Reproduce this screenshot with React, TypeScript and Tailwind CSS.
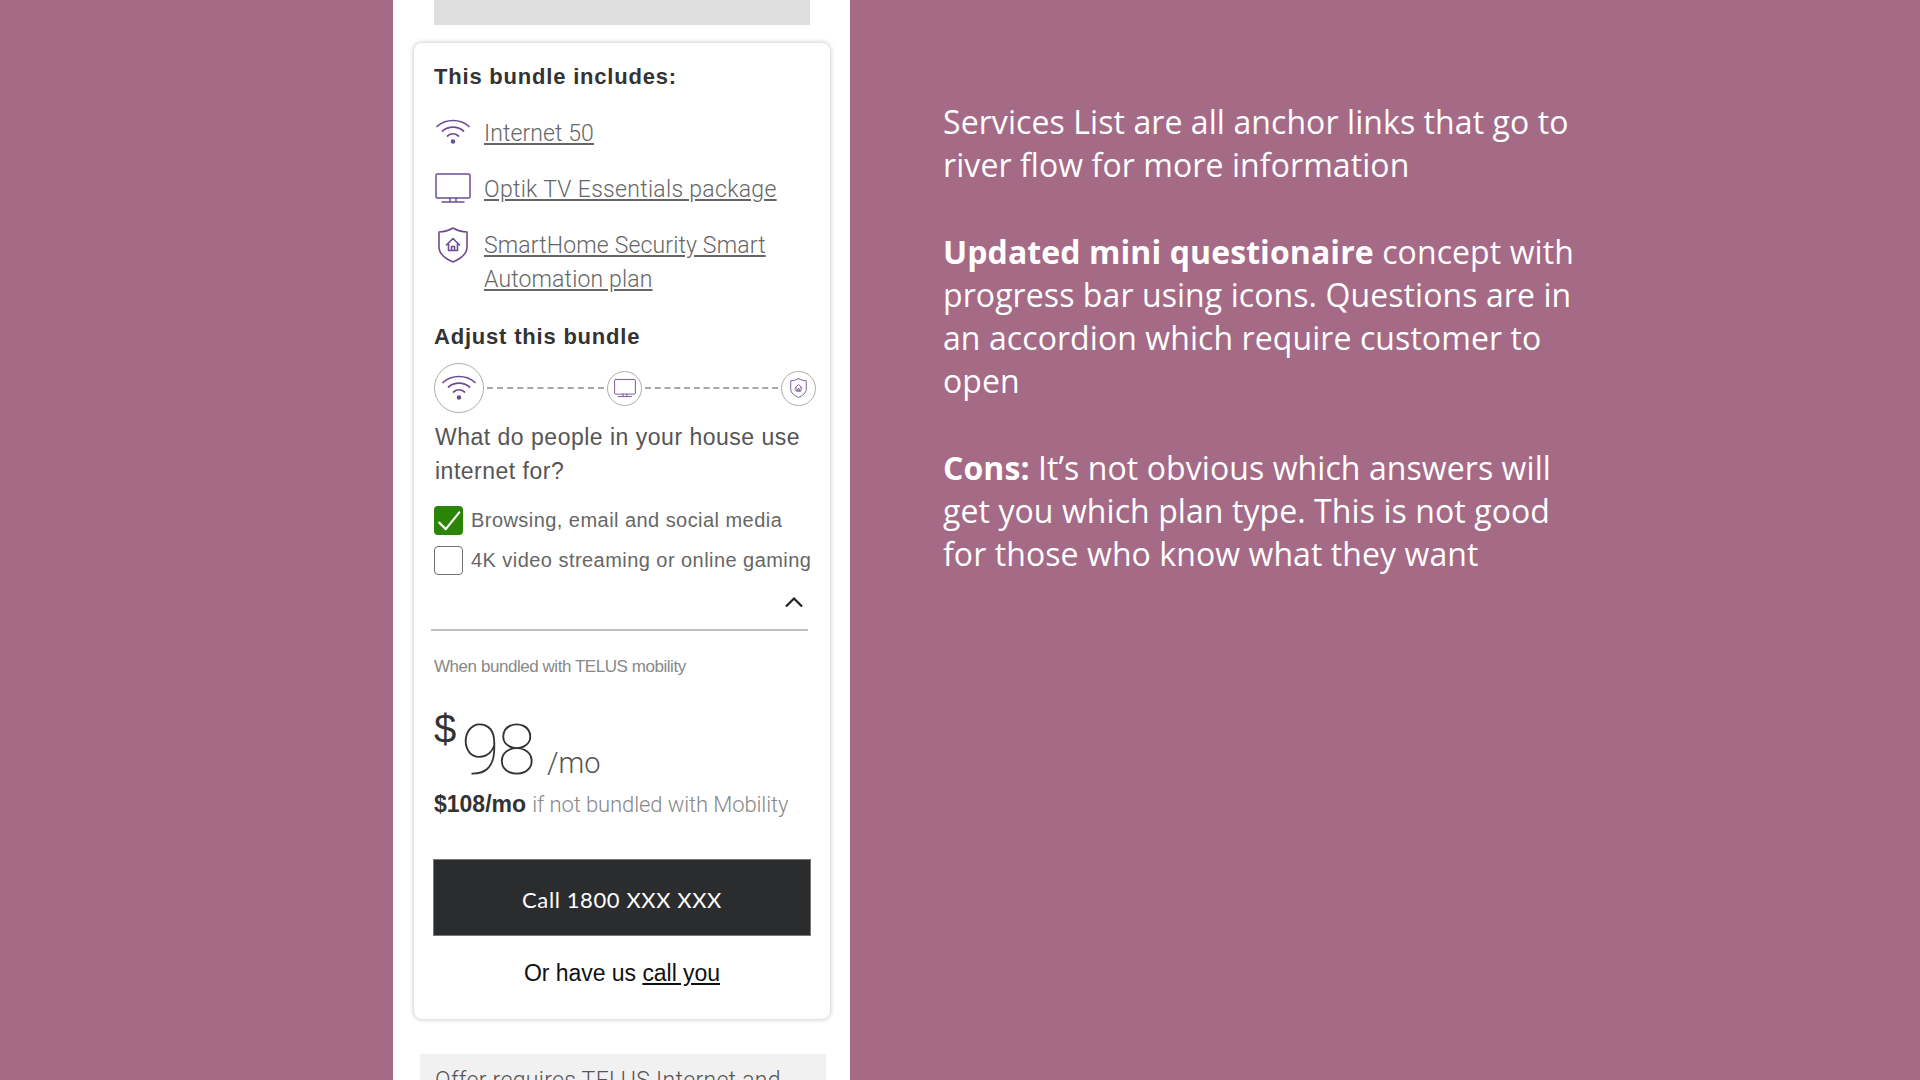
import React from 'react';

const PURPLE = '#6d4c94';

function WifiIcon({ className }: { className?: string }) {
  return (
    <svg viewBox="0 0 34 26" fill="none" stroke={PURPLE} strokeWidth="1.7" strokeLinecap="round" className={className}>
      <path d="M1 7.5C9.5 -0.5 24.5 -0.5 33 7.5" />
      <path d="M6.5 12C12.5 6.8 21.5 6.8 27.5 12" />
      <path d="M11.5 17C14.8 14.2 19.2 14.2 22.5 17" />
      <circle cx="17" cy="22.5" r="2.2" fill={PURPLE} stroke="none" />
    </svg>
  );
}

function TvIcon({ className }: { className?: string }) {
  return (
    <svg viewBox="0 0 36 30" fill="none" stroke={PURPLE} strokeWidth="1.5" strokeLinecap="round" strokeLinejoin="round" className={className}>
      <rect x="1" y="1" width="34" height="24" rx="1.5" />
      <path d="M15 25V28M21 25V28M7 29H29" />
    </svg>
  );
}

function ShieldIcon({ className }: { className?: string }) {
  return (
    <svg viewBox="0 0 30 36" fill="none" stroke={PURPLE} strokeWidth="1.6" strokeLinecap="round" strokeLinejoin="round" className={className}>
      <path d="M15 1C19 3.4 23.5 4.8 29 5V20C29 27 22 32 15 35C8 32 1 27 1 20V5C6.5 4.8 11 3.4 15 1Z" />
      <path d="M8.5 18L15 11.5L21.5 18M10.5 16.5V23.5H19.5V16.5M13.5 23.5V19.5H16.5V23.5" />
    </svg>
  );
}

function StepCircle({ size, children }: { size: string; children: React.ReactNode }) {
  return (
    <div className={`${size} flex shrink-0 items-center justify-center rounded-full border-[1.5px] border-[#adadad] bg-white`}>
      {children}
    </div>
  );
}

export default function App() {
  return (
    <div className="flex h-screen overflow-hidden bg-[#a56a86] font-['Liberation_Sans',sans-serif]">
      <div className="ml-[393px] h-full w-[457px] shrink-0 overflow-hidden bg-white">
        <div className="ml-[41px] h-[25px] w-[376px] bg-[#dedede]" />

        {/* Bundle card */}
        <div className="ml-[21px] mt-[18px] h-[976px] w-[416px] rounded-lg bg-white pl-5 pt-[19px] shadow-[0_0_5px_rgba(0,0,0,0.28)]">
          <h2 className="text-[22px] font-bold leading-[30px] tracking-[0.8px] text-[#333]">This bundle includes:</h2>

          <div className="mt-[25px] flex h-[34px] items-center">
            <div className="flex w-[50px] shrink-0 pb-[5px] pl-[2px]"><WifiIcon className="h-[26px] w-[34px]" /></div>
            <a className="font-['Roboto',sans-serif] text-[23px] font-light leading-[34px] tracking-[0.1px] text-[#666] underline">Internet 50</a>
          </div>
          <div className="mt-[22px] flex h-[34px] items-center">
            <div className="flex w-[50px] shrink-0 pb-[4px] pl-[1px]"><TvIcon className="h-[30px] w-[36px]" /></div>
            <a className="font-['Roboto',sans-serif] text-[23px] font-light leading-[34px] tracking-[0.3px] text-[#666] underline">Optik TV Essentials package</a>
          </div>
          <div className="mt-[22px] flex">
            <div className="-mt-[2px] flex w-[50px] shrink-0 items-start pl-1"><ShieldIcon className="h-[36px] w-[30px]" /></div>
            <a className="w-[320px] font-['Roboto',sans-serif] text-[23px] font-light leading-[34px] tracking-[0.15px] text-[#666] underline">SmartHome Security Smart Automation plan</a>
          </div>

          <h2 className="mt-[25px] text-[22px] font-bold leading-[30px] tracking-[0.8px] text-[#333]">Adjust this bundle</h2>

          {/* Progress stepper */}
          <div className="mt-[11px] flex h-[50px] w-[382px] items-center">
            <StepCircle size="h-[50px] w-[50px]"><WifiIcon className="h-[26px] w-[34px]" /></StepCircle>
            <div className="mx-[3px] w-[117px] border-t-2 border-dashed border-[#a8a8a8]" />
            <StepCircle size="h-[35px] w-[35px]"><TvIcon className="h-[20px] w-[22px]" /></StepCircle>
            <div className="mx-[3px] flex-1 border-t-2 border-dashed border-[#a8a8a8]" />
            <StepCircle size="h-[35px] w-[35px]"><ShieldIcon className="h-[20px] w-[17px]" /></StepCircle>
          </div>

          <p className="mt-[7px] w-[385px] pl-[1px] text-[23px] leading-[34px] tracking-[0.5px] text-[#555]">What do people in your house use internet for?</p>

          {/* Options */}
          <div className="mt-[18px] flex h-[29px] items-center">
            <div className="flex h-[29px] w-[29px] shrink-0 items-center justify-center rounded-[4px] bg-[#2a8507]">
              <svg viewBox="0 0 24 24" fill="none" stroke="white" strokeWidth="2" strokeLinecap="round" strokeLinejoin="round" className="h-[26px] w-[26px]">
                <path d="M3 13.5L9 19.5L21.5 4" />
              </svg>
            </div>
            <span className="ml-2 whitespace-nowrap pb-[2px] text-[20px] tracking-[0.45px] text-[#666]">Browsing, email and social media</span>
          </div>
          <div className="mt-[11px] flex h-[29px] items-center">
            <div className="h-[29px] w-[29px] shrink-0 rounded-[4px] border-[1.5px] border-[#6f7278] bg-white" />
            <span className="ml-2 whitespace-nowrap pb-[2px] text-[20px] tracking-[0.45px] text-[#666]">4K video streaming or online gaming</span>
          </div>

          <div className="mt-[22px] flex w-[369px] justify-end">
            <svg viewBox="0 0 18 10" fill="none" stroke="#222" strokeWidth="2.2" className="h-[10px] w-[18px]">
              <path d="M1 9.5L9 1.5L17 9.5" />
            </svg>
          </div>
          <div className="ml-[-3px] mt-[22px] h-[2px] w-[377px] bg-[#bdbdbd]" />

          <p className="mt-[23px] text-[17px] leading-[26px] tracking-[-0.45px] text-[#888]">When bundled with TELUS mobility</p>

          {/* Price */}
          <div className="mt-[27px] flex h-[74px] items-start text-[#333]">
            <span className="text-[40px] leading-[44px]">$</span>
            <span className="ml-[5px] mt-[3px] font-['Roboto',sans-serif] text-[70px] font-thin leading-[80px] tracking-[-2px]">98</span>
            <span className="ml-[13px] mt-[38px] font-['Roboto',sans-serif] text-[29px] font-light leading-[36px] text-[#555]">/mo</span>
          </div>
          <p className="mt-[7px] text-[22px] leading-[32px] text-[#888]">
            <span className="text-[23px] font-bold text-[#333]">$108/mo</span>{' '}
            <span className="font-['Roboto',sans-serif] font-light tracking-[-0.1px]">if not bundled with Mobility</span>
          </p>

          <button className="ml-[-1px] mt-[38px] flex h-[77px] w-[378px] items-center justify-center border border-[#77787a] bg-[#2b2c2e] pt-[3px] font-['Lato',sans-serif] text-[22px] tracking-[0.6px] text-white">
            Call 1800 XXX XXX
          </button>

          <p className="ml-[-1px] mt-5 w-[378px] text-center text-[23px] leading-[34px] tracking-[-0.05px] text-[#111]">
            Or have us <a className="underline">call you</a>
          </p>
        </div>

        <div className="ml-[27px] mt-[35px] h-[40px] w-[406px] bg-[#f1f1f1] pl-[15px] pt-[12px] font-['Roboto',sans-serif] text-[23px] font-light leading-[30px] tracking-[0.3px] text-[#555]">
          Offer requires TELUS Internet and
        </div>
      </div>

      {/* Notes */}
      <div className="ml-[93px] w-[680px] pt-[100px] font-['Open_Sans',sans-serif] text-[32px] leading-[43.2px] tracking-[0.08px] text-white">
        <p>Services List are all anchor links that go to<br />river flow for more information</p>
        <p className="mt-[43.2px]"><b>Updated mini questionaire</b> concept with<br />progress bar using icons. Questions are in<br />an accordion which require customer to<br />open</p>
        <p className="mt-[43.2px]"><b>Cons:</b> It’s not obvious which answers will<br />get you which plan type. This is not good<br />for those who know what they want</p>
      </div>
    </div>
  );
}
